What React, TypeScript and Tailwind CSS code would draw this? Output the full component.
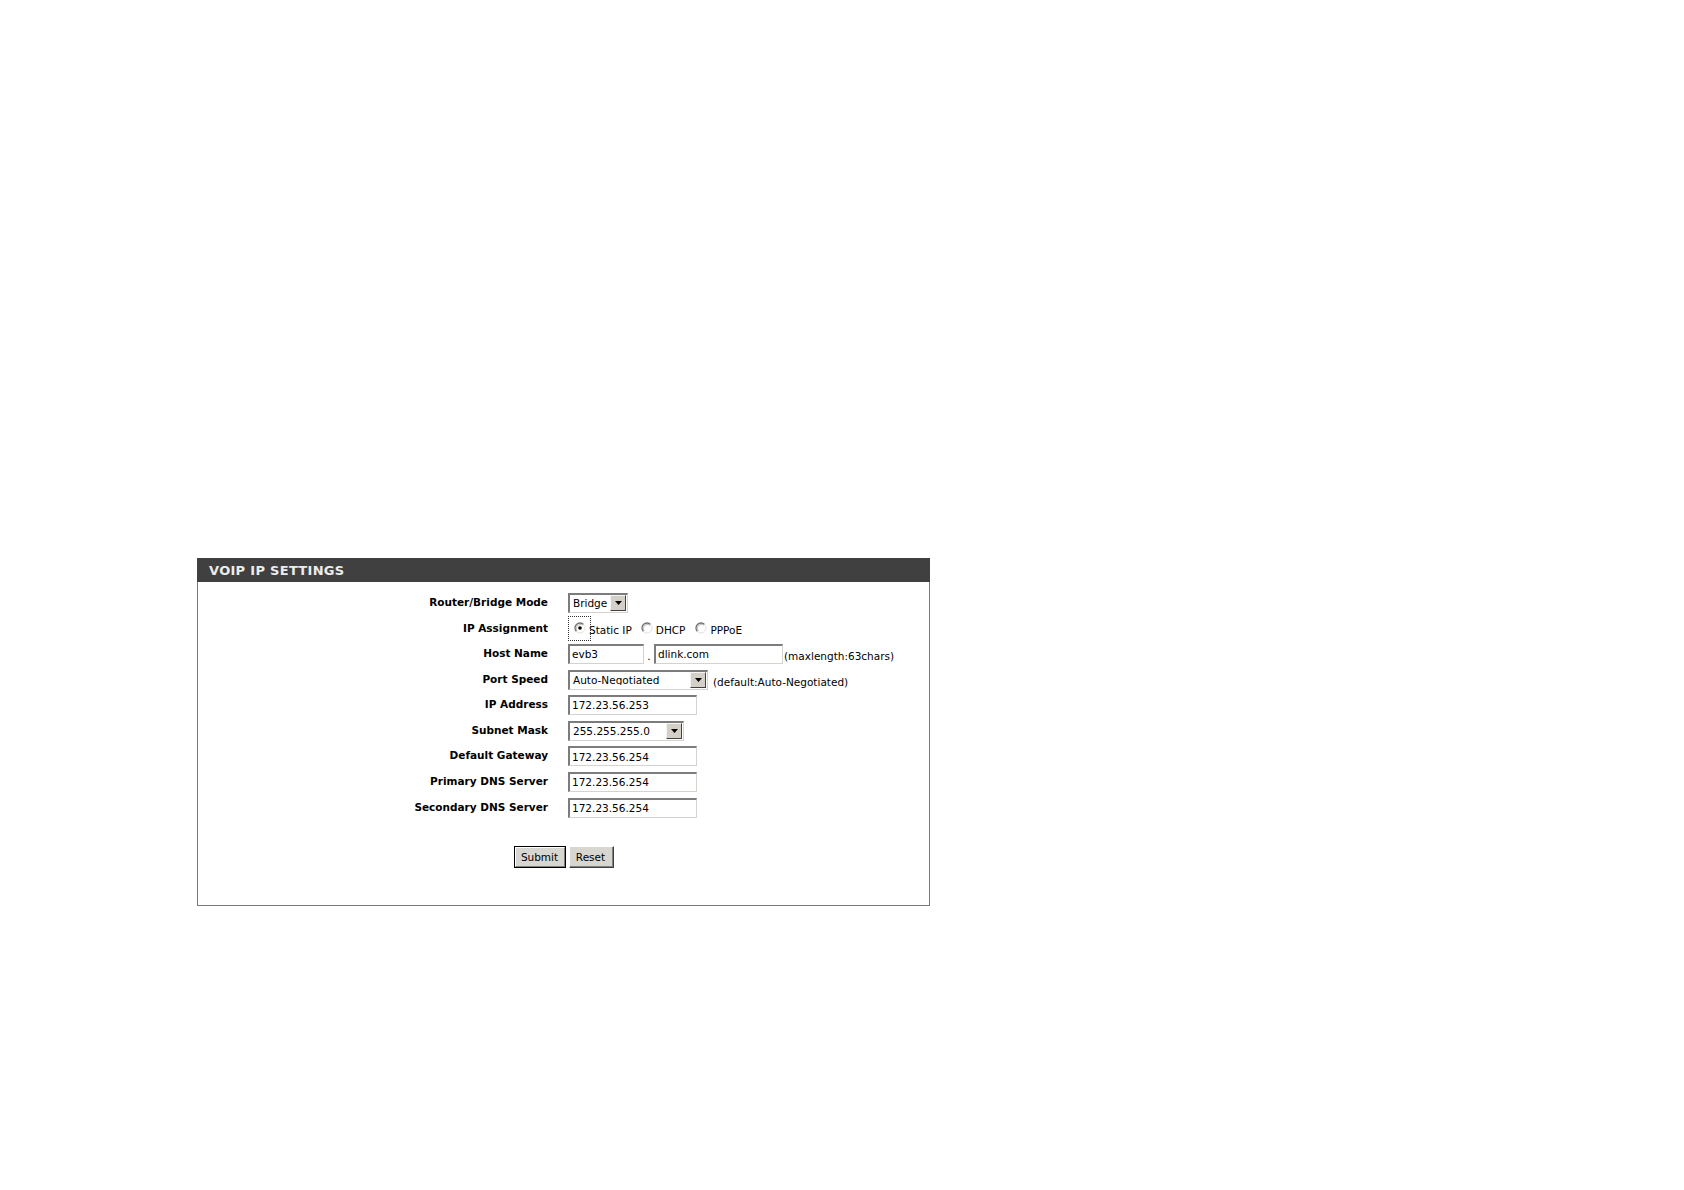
const ui = { fontFamily: '"DejaVu Sans", Verdana, sans-serif' };

function Radio({ checked = false }: { checked?: boolean }) {
  return (
    <svg width="12" height="12" viewBox="0 0 12 12" className="shrink-0">
      <circle cx="6" cy="6" r="5" fill="#ffffff" />
      <path d="M2.46 9.54 A5 5 0 0 1 9.54 2.46" fill="none" stroke="#6e6e6e" strokeWidth="1.3" />
      <path d="M3.2 8.8 A4 4 0 0 1 8.8 3.2" fill="none" stroke="#a8a8a8" strokeWidth="0.8" />
      <path d="M9.54 2.46 A5 5 0 0 1 2.46 9.54" fill="none" stroke="#e4e2dc" strokeWidth="1" />
      {checked && <circle cx="6" cy="6" r="1.8" fill="#000000" />}
    </svg>
  );
}

function TextBox({ value, width }: { value: string; width: string }) {
  return (
    <div
      className={`${width} h-[20px] flex items-center bg-white border-t-2 border-l-2 border-b border-r border-t-[#7c7c7c] border-l-[#7c7c7c] border-b-[#d6d3ce] border-r-[#d6d3ce] pl-[2px] text-[10.5px] text-black leading-none overflow-hidden whitespace-nowrap`}
    >
      {value}
    </div>
  );
}

function Select({ value, width }: { value: string; width: string }) {
  return (
    <div
      className={`${width} h-[20px] flex items-center bg-white border-t-2 border-l-2 border-b border-r border-t-[#7c7c7c] border-l-[#7c7c7c] border-b-[#d6d3ce] border-r-[#d6d3ce] text-[10.5px] text-black leading-none`}
    >
      <span className="flex-1 pl-[3px] whitespace-nowrap overflow-hidden">{value}</span>
      <span className="w-[16px] h-[16px] mr-[1px] flex items-center justify-center bg-[#d4d0c8] border-t border-l border-t-[#f4f4f4] border-l-[#f4f4f4] border-b border-r border-b-[#404040] border-r-[#404040]">
        <svg width="7" height="4" viewBox="0 0 7 4">
          <path d="M0 0 H7 L3.5 4 Z" fill="#000000" />
        </svg>
      </span>
    </div>
  );
}

function Row({ label, children }: { label: string; children: React.ReactNode }) {
  return (
    <div className="flex h-[25.6px] items-center">
      <div className="w-[350px] shrink-0 text-right text-[10.5px] font-bold text-black whitespace-nowrap">
        {label}
      </div>
      <div className="ml-[20px] flex items-center">{children}</div>
    </div>
  );
}

export default function App() {
  return (
    <div className="min-h-[1190px] bg-white pt-[558px] pl-[197px]" style={ui}>
      <div className="w-[733px] h-[348px] border-r border-b border-l border-[#7a7a7a] flex flex-col">
        {/* Header bar */}
        <div className="h-[24px] -ml-px -mr-px bg-[#404040] flex items-center pl-[12px]">
          <span className="text-[13px] font-bold text-[#ececec] tracking-[0.3px] leading-none">
            VOIP IP SETTINGS
          </span>
        </div>

        {/* Form rows */}
        <div className="pt-[8px] flex flex-col">
          <Row label="Router/Bridge Mode">
            <Select value="Bridge" width="w-[60px]" />
          </Row>

          <Row label="IP Assignment">
            <div className="flex items-center text-[10.5px] text-black">
              <span className="relative w-[23px] h-[25px] flex items-center justify-center">
                <span className="absolute inset-0 border border-dotted border-[#333]" />
                <Radio checked />
              </span>
              <span className="-ml-[2px] mt-[5px]">Static IP</span>
              <span className="ml-[9px]">
                <Radio />
              </span>
              <span className="ml-[3px] mt-[5px]">DHCP</span>
              <span className="ml-[10px]">
                <Radio />
              </span>
              <span className="ml-[3px] mt-[5px]">PPPoE</span>
            </div>
          </Row>

          <Row label="Host Name">
            <div className="flex items-end">
              <TextBox value="evb3" width="w-[76px]" />
              <span className="w-[10px] text-center text-[10.5px] leading-none pb-[2px]">.</span>
              <TextBox value="dlink.com" width="w-[129px]" />
              <span className="ml-[1px] text-[10.5px] leading-none mb-[2px]">(maxlength:63chars)</span>
            </div>
          </Row>

          <Row label="Port Speed">
            <div className="flex items-end">
              <Select value="Auto-Negotiated" width="w-[140px]" />
              <span className="ml-[5px] text-[10.5px] leading-none mb-[2px]">(default:Auto-Negotiated)</span>
            </div>
          </Row>

          <Row label="IP Address">
            <TextBox value="172.23.56.253" width="w-[129px]" />
          </Row>

          <Row label="Subnet Mask">
            <Select value="255.255.255.0" width="w-[116px]" />
          </Row>

          <Row label="Default Gateway">
            <TextBox value="172.23.56.254" width="w-[129px]" />
          </Row>

          <Row label="Primary DNS Server">
            <TextBox value="172.23.56.254" width="w-[129px]" />
          </Row>

          <Row label="Secondary DNS Server">
            <TextBox value="172.23.56.254" width="w-[129px]" />
          </Row>
        </div>

        {/* Buttons */}
        <div className="mt-[26px] flex justify-center gap-[3px]">
          <button className="w-[52px] h-[22px] border border-black bg-[#d8d6d0] flex items-center justify-center p-0">
            <span className="w-full h-full flex items-center justify-center border-t border-l border-t-white border-l-white border-b border-r border-b-[#808080] border-r-[#808080] text-[10.5px] text-black leading-none">
              Submit
            </span>
          </button>
          <button className="w-[45px] h-[22px] bg-[#d8d6d0] border-t border-l border-t-white border-l-white border-b border-r border-b-[#404040] border-r-[#404040] p-0">
            <span className="w-full h-full flex items-center justify-center border-b border-r border-b-[#808080] border-r-[#808080] text-[10.5px] text-black leading-none">
              Reset
            </span>
          </button>
        </div>
      </div>
    </div>
  );
}
